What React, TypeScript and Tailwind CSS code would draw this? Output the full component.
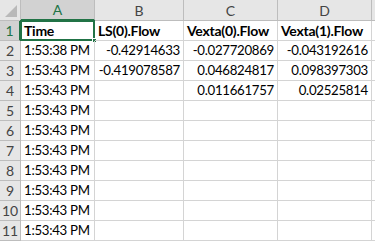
const cols = ['A', 'B', 'C', 'D'];

const rows: string[][] = [
  ['Time', 'LS(0).Flow', 'Vexta(0).Flow', 'Vexta(1).Flow'],
  ['1:53:38 PM', '-0.42914633', '-0.027720869', '-0.043192616'],
  ['1:53:43 PM', '-0.419078587', '0.046824817', '0.098397303'],
  ['1:53:43 PM', '', '0.011661757', '0.02525814'],
  ['1:53:43 PM', '', '', ''],
  ['1:53:43 PM', '', '', ''],
  ['1:53:43 PM', '', '', ''],
  ['1:53:43 PM', '', '', ''],
  ['1:53:43 PM', '', '', ''],
  ['1:53:43 PM', '', '', ''],
  ['1:53:43 PM', '', '', ''],
];

export default function App() {
  return (
    <div
      className="w-[375px] h-[245px] overflow-hidden bg-white text-[13.25px] tracking-[-0.3px] text-black"
      style={{ fontFamily: 'Lato, "Open Sans", sans-serif' }}
    >
      <div className="grid grid-cols-[21px_74px_89px_94px_94px_1fr] grid-rows-[21px] auto-rows-[20px]">
        {/* corner */}
        <div className="relative bg-[#e6e6e6] border-r border-b border-[#bdbdbd]">
          <div className="absolute right-[3px] bottom-[3px] w-0 h-0 border-l-[12px] border-l-transparent border-b-[12px] border-b-[#b9b9b9]" />
        </div>
        {cols.map((c, i) => (
          <div
            key={c}
            className={
              i === 0
                ? 'flex items-center justify-center bg-[#d2d2d2] border-r border-[#bdbdbd] border-b-2 border-b-[#217346] text-[#217346] text-[14px] tracking-normal'
                : 'flex items-center justify-center bg-[#e6e6e6] border-r border-b border-[#bdbdbd] text-[#444] text-[14px] tracking-normal'
            }
          >
            {c}
          </div>
        ))}
        <div className="bg-[#e6e6e6] border-b border-[#bdbdbd]" />

        {rows.map((r, ri) => (
          <>
            <div
              key={'h' + ri}
              className={
                ri === 0
                  ? 'flex items-center justify-center bg-[#d2d2d2] border-b border-[#bdbdbd] border-r-2 border-r-[#217346] text-[#217346] text-[14px] tracking-normal'
                  : 'flex items-center justify-center bg-[#e6e6e6] border-r border-b border-[#bdbdbd] text-[#444] text-[14px] tracking-normal'
              }
            >
              {ri + 1}
            </div>
            {r.map((v, ci) => {
              const isNum = ri > 0 && ci > 0;
              const selected = ri === 0 && ci === 0;
              return (
                <div
                  key={ri + '-' + ci}
                  className={
                    'relative flex items-center whitespace-nowrap overflow-visible border-r border-b border-[#d4d4d4] ' +
                    (isNum ? 'justify-end pr-[3px] ' : 'pl-[3px] ') +
                    (ri === 0 ? 'font-bold text-[14px] tracking-[-0.25px] ' : '')
                  }
                >
                  {v}
                  {selected && (
                    <>
                      <div className="absolute -left-px -top-px -right-px -bottom-px border-2 border-[#217346] pointer-events-none" />
                      <div className="absolute -right-[3px] -bottom-[3px] w-[5px] h-[5px] bg-[#217346] border border-white" />
                    </>
                  )}
                </div>
              );
            })}
            <div key={'e' + ri} className="border-b border-[#d4d4d4]" />
          </>
        ))}
      </div>
    </div>
  );
}
